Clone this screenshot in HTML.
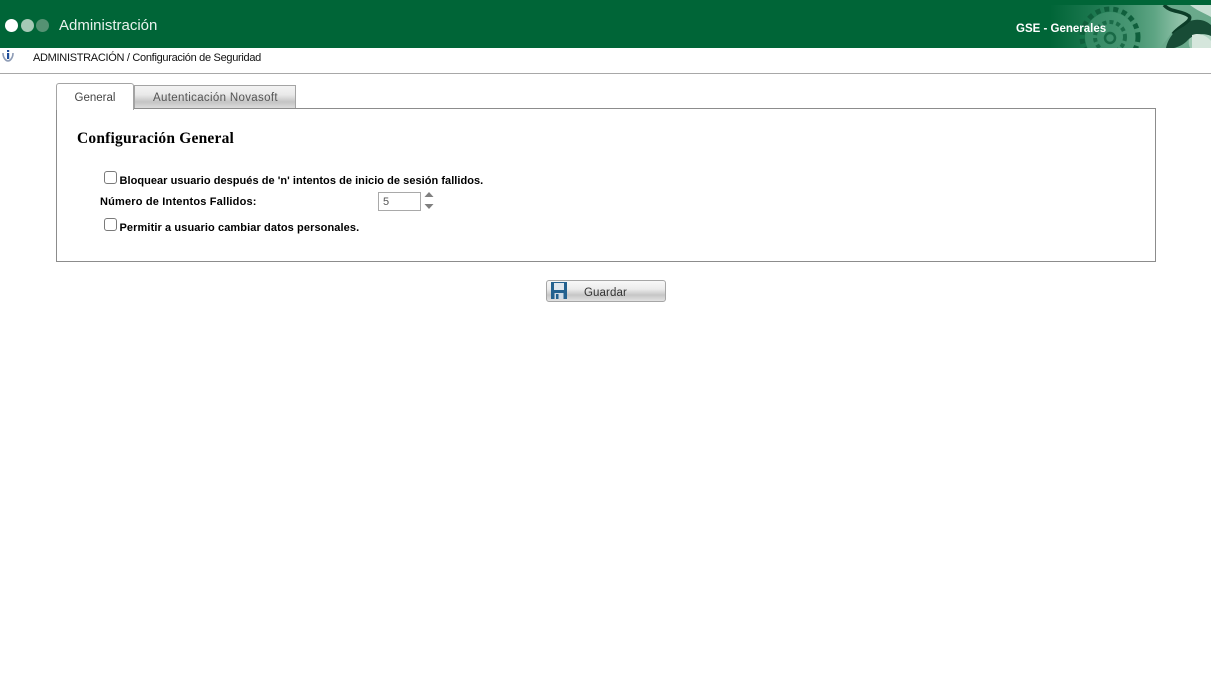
<!DOCTYPE html>
<html lang="es">
<head>
<meta charset="utf-8">
<title>Administración</title>
<style>
html,body{margin:0;padding:0;background:#fff;width:1211px;height:691px;overflow:hidden}
body{position:relative;font-family:"Liberation Sans",sans-serif;color:#000}
.a{position:absolute;white-space:nowrap}
.cb{position:absolute;width:11px;height:11px;border:1px solid #7a7a7a;border-radius:3px;background:#fff}
</style>
</head>
<body>
<div class="a" style="left:0;top:0;width:1211px;height:48px;background:#006537"></div>
<svg class="a" style="left:1040px;top:5px" width="171" height="43" viewBox="0 0 171 43">
<defs>
<linearGradient id="g" x1="0" x2="1" y1="0" y2="0"><stop offset="0" stop-color="#006537"/><stop offset=".3" stop-color="#1f7a52"/><stop offset=".65" stop-color="#5ea584"/><stop offset=".8" stop-color="#8dc0a6"/><stop offset="1" stop-color="#b5d6c5"/></linearGradient>
</defs>
<rect x="10" y="0" width="161" height="43" fill="url(#g)"/>
<circle cx="70" cy="32" r="25" fill="#4d9a78" opacity=".55"/>
<circle cx="70" cy="32" r="28" fill="none" stroke="#0f5f3c" stroke-width="5" stroke-dasharray="5 4"/>
<circle cx="70" cy="32" r="15" fill="none" stroke="#0f5f3c" stroke-width="4" stroke-dasharray="4 3" opacity=".75"/>
<circle cx="70" cy="33" r="5" fill="none" stroke="#0f5f3c" stroke-width="2.5" opacity=".8"/>
<path d="M122 0C130 7 142 6 150 12C146 18 136 22 130 30C126 36 122 40 120 43L150 43C146 34 152 28 160 22C166 19 170 22 171 24L171 0Z" fill="#6aa98b"/>
<path d="M124 0C131 8 141 5 149 11C153 16 139 21 133 29" fill="none" stroke="#0c3d28" stroke-width="3.5"/>
<path d="M132 30C136 24 146 22 150 16C156 14 164 14 171 20L171 31C162 27 152 30 147 36C143 40 138 42 134 43L126 43C127 38 129 34 132 30Z" fill="#184c36"/>
<path d="M152 30C160 27 167 31 171 36L171 43L152 43Z" fill="#d5e6dc"/>
<path d="M150 0L171 0L171 12C164 8 156 5 150 0Z" fill="#c6dfd2"/>
</svg>
<div class="a" style="left:5px;top:19px;width:13px;height:13px;border-radius:50%;background:#fff"></div>
<div class="a" style="left:21px;top:19px;width:13px;height:13px;border-radius:50%;background:#a6c9b6"></div>
<div class="a" style="left:36px;top:19px;width:13px;height:13px;border-radius:50%;background:#559273"></div>
<div class="a" style="left:59px;top:18px;font-size:15px;line-height:16px;color:#e9f3ee">Administración</div>
<div class="a" style="left:1016px;top:22px;font-size:11.5px;line-height:14px;font-weight:bold;color:#fff">GSE - Generales</div>

<svg class="a" style="left:2px;top:49px" width="12" height="13" viewBox="0 0 12 13">
<path d="M1 4C1 9 4 12 6 12C8 12 11 9 11 4" fill="none" stroke="#8d9bb5" stroke-width="1.6"/>
<rect x="5" y="4" width="2.2" height="6" fill="#1f4e9c"/>
<rect x="5" y="1" width="2.2" height="2" fill="#1f4e9c"/>
</svg>
<div class="a" style="left:33px;top:52px;font-size:11px;line-height:13px;color:#111;letter-spacing:-.3px">ADMINISTRACIÓN / Configuración de Seguridad</div>
<div class="a" style="left:0;top:73px;width:1211px;height:1px;background:#a8a8a8"></div>

<div class="a" style="left:56px;top:108px;width:1098px;height:152px;border:1px solid #8c8c8c"></div>
<div class="a" style="left:56px;top:83px;width:76px;height:26px;border:1px solid #a4a4a4;border-bottom:0;border-radius:3px 3px 0 0;background:#fff"></div>
<div class="a" style="left:74.5px;top:91px;font-size:11.5px;line-height:14px;color:#444">General</div>
<div class="a" style="left:134px;top:85px;width:160px;height:22px;border:1px solid #a4a4a4;border-bottom:0;background:linear-gradient(#f3f3f3 0,#e9e9e9 40%,#c4c4c4 72%,#dcdcdc 100%)"></div>
<div class="a" style="left:153px;top:91px;font-size:11.5px;line-height:14px;color:#555;letter-spacing:.33px">Autenticación Novasoft</div>

<div class="a" style="left:77px;top:130px;font-family:'Liberation Serif',serif;font-size:15.5px;line-height:17px;font-weight:bold;letter-spacing:.2px">Configuración General</div>
<div class="cb" style="left:104px;top:171px"></div>
<div class="a" style="left:119.5px;top:175px;font-size:11px;line-height:13px;font-weight:bold;letter-spacing:.04px">Bloquear usuario después de 'n' intentos de inicio de sesión fallidos.</div>
<div class="a" style="left:100px;top:196px;font-size:11px;line-height:13px;font-weight:bold;letter-spacing:.18px">Número de Intentos Fallidos:</div>
<div class="a" style="left:378px;top:192px;width:41px;height:17px;border:1px solid #a9a9a9;background:#fff"></div>
<div class="a" style="left:383px;top:196px;font-size:11px;line-height:13px;color:#555">5</div>
<svg class="a" style="left:424px;top:191px" width="10" height="19" viewBox="0 0 10 19">
<path d="M5 1L9.5 6H.5Z" fill="#7f7f7f"/>
<path d="M.5 13H9.5L5 18Z" fill="#7f7f7f"/>
</svg>
<div class="cb" style="left:104px;top:218px"></div>
<div class="a" style="left:119.5px;top:222px;font-size:11px;line-height:13px;font-weight:bold;letter-spacing:.1px">Permitir a usuario cambiar datos personales.</div>

<div class="a" style="left:546px;top:280px;width:118px;height:20px;border:1px solid #a6a6a6;border-radius:3px;background:linear-gradient(#f8f8f8 0,#ececec 40%,#c6c6c6 70%,#e2e2e2 100%)"></div>
<svg class="a" style="left:551px;top:282px" width="16" height="17" viewBox="0 0 16 17">
<path d="M0 0H16V17H0Z" fill="#23618f"/>
<rect x="3" y="1" width="10" height="7" fill="#dfe7ee"/>
<rect x="3.5" y="11" width="9" height="6" fill="#cfdbe6"/>
<rect x="5" y="12" width="2.5" height="5" fill="#23618f"/>
</svg>
<div class="a" style="left:584px;top:286px;font-size:11.5px;line-height:14px;color:#333;letter-spacing:.1px">Guardar</div>
</body>
</html>
